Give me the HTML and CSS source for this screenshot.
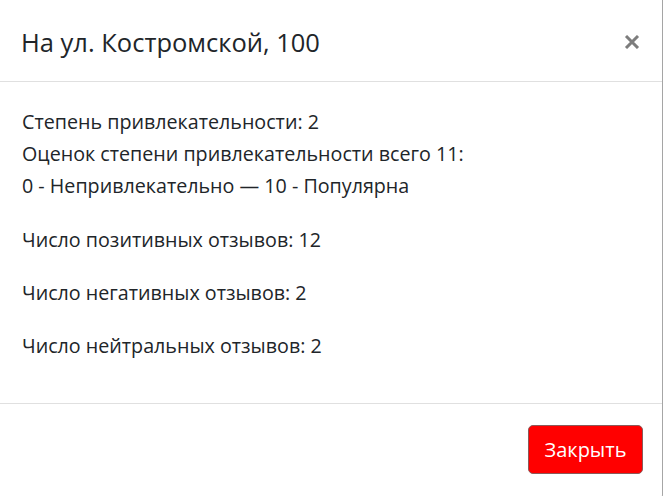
FILE: index.html
```html
<!DOCTYPE html>
<html lang="ru">
<head>
<meta charset="utf-8">
<title>Modal</title>
<link rel="stylesheet" href="styles.css">
</head>
<body>
<div class="modal">
  <div class="modal-header">
    <h5 class="modal-title">На ул. Костромской, 100</h5>
    <button class="close" type="button" aria-label="Close">
      <svg width="16" height="14" viewBox="0 0 16 14"><path d="M2 1 L14 13 M14 1 L2 13" stroke="#7d7d7d" stroke-width="3" stroke-linecap="butt"/></svg>
    </button>
  </div>
  <div class="modal-body">
    <p class="first">Степень привлекательности: 2<br>Оценок степени привлекательности всего 11:<br>0 - Непривлекательно — 10 - Популярна</p>
    <p>Число позитивных отзывов: 12</p>
    <p>Число негативных отзывов: 2</p>
    <p>Число нейтральных отзывов: 2</p>
  </div>
  <div class="modal-footer">
    <button class="btn-close" type="button">Закрыть</button>
  </div>
</div>
</body>
</html>
```
FILE: styles.css
```css
html, body {
  margin: 0;
  padding: 0;
  background: #fff;
}
body {
  font-family: "Open Sans", "Noto Sans", sans-serif;
  color: #212529;
  overflow: hidden;
}
.modal {
  width: 662px;
  height: 500px;
  border-right: 1px solid rgba(0,0,0,0.35);
  border-bottom: 1px solid rgba(0,0,0,0.35);
  border-bottom-right-radius: 6px;
  display: flex;
  flex-direction: column;
}
.modal-header {
  display: flex;
  align-items: center;
  justify-content: space-between;
  height: 82px;
  box-sizing: border-box;
  padding: 3px 22px 0 21px;
  border-bottom: 1px solid #e0e0e0;
}
.modal-title {
  margin: 0;
  font-size: 25.5px;
  font-weight: 400;
  line-height: 36px;
}
.close {
  background: none;
  border: 0;
  padding: 0;
  width: 16px;
  height: 14px;
  display: flex;
  margin-right: 0;
}
.modal-body {
  padding: 24px 20px 0 22px;
  font-size: 19.7px;
  line-height: 32px;
}
.modal-body p {
  margin: 0 0 21px;
}
.modal-body p.first {
  margin-bottom: 22px;
}
.modal-body p:last-child {
  margin-bottom: 41px;
}
.modal-footer {
  border-top: 1px solid #e0e0e0;
  display: flex;
  justify-content: flex-end;
  padding: 21px 19px 0 0;
}
.btn-close {
  font-family: "Open Sans", "Noto Sans", sans-serif;
  font-size: 20px;
  line-height: 28px;
  background: #ff0000;
  color: #fff;
  border: 1px solid #8a5a5a;
  border-radius: 5px;
  width: 115px;
  height: 49px;
  padding: 0;
}
```
